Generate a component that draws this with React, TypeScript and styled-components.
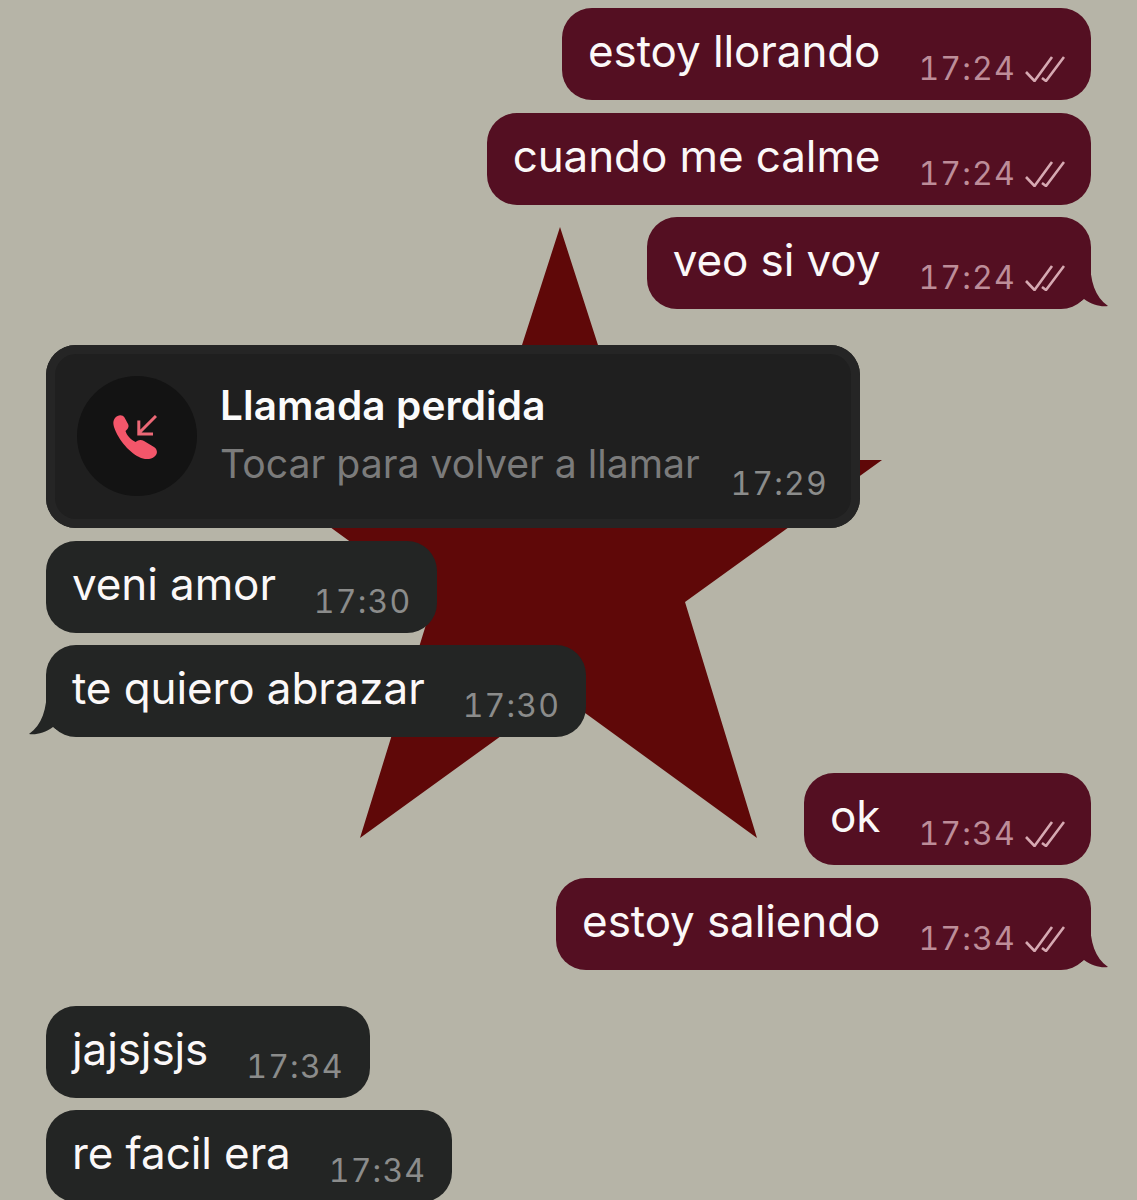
import React from "react";
import styled, { createGlobalStyle } from "styled-components";

interface IMessage {
  text: string;
  time: string;
}

interface IGroup {
  mine: boolean;
  messages: IMessage[];
}

const topGroup: IGroup = {
  mine: true,
  messages: [
    { text: "estoy llorando", time: "17:24" },
    { text: "cuando me calme", time: "17:24" },
    { text: "veo si voy", time: "17:24" },
  ],
};

const theirGroup: IGroup = {
  mine: false,
  messages: [
    { text: "veni amor", time: "17:30" },
    { text: "te quiero abrazar", time: "17:30" },
  ],
};

const myGroup: IGroup = {
  mine: true,
  messages: [
    { text: "ok", time: "17:34" },
    { text: "estoy saliendo", time: "17:34" },
  ],
};

const lastGroup: IGroup = {
  mine: false,
  messages: [
    { text: "jajsjsjs", time: "17:34" },
    { text: "re facil era", time: "17:34" },
  ],
};

const Star = () => (
  <StarSvg viewBox="0 0 1137 1200" aria-hidden="true">
    <polygon
      points="560,227 635,460 882,460 685,602 757,838 559,694 360,838 433,602 238,460 485,460"
      fill="#5f0808"
    />
  </StarSvg>
);

const Checks = () => (
  <ChecksSvg viewBox="0 0 40 26" aria-hidden="true">
    <path d="M1 16 L9.5 25 L27 1" />
    <path d="M17 22 L21 25 L39 1" />
  </ChecksSvg>
);

const MissedCallIcon = () => (
  <CallSvg viewBox="0 0 44 44" aria-hidden="true">
    <path
      d="M2 3 C5 -0.5 9.5 -0.5 11.5 2.5 L15 9 C16 11 15.5 13 14 14.5 L12.5 16 C13.5 20 18 25 22.5 27 L24.5 25.8 C26.5 24.6 29 24.8 31 26 L41 32 C44 34 44.8 37.5 43 40 C40.5 43.5 36.5 44.5 32 44 C22 42.5 9 30 3 17 C0.5 11.5 -1 7 2 3 Z"
      fill="#f4566a"
    />
    <path
      d="M43 1 L26 18 M25.8 5.5 L25.8 19 L40 19"
      fill="none"
      stroke="#ec6876"
      strokeWidth="3"
    />
  </CallSvg>
);

const Tail = ({ mine }: { mine: boolean }) => (
  <TailSvg $mine={mine} viewBox="0 0 40 50" aria-hidden="true">
    <path
      d="M21 0 C21 22 26 38 39 47 C32 48 23 46 15 40 C10 44 5 46 0 46 L0 0 Z"
      fill={mine ? "#540f22" : "#232524"}
    />
  </TailSvg>
);

const Bubble: React.FC<{ mine: boolean; tail: boolean; message: IMessage }> = ({
  mine,
  tail,
  message,
}) => (
  <BubbleRoot $mine={mine}>
    {tail && <Tail mine={mine} />}
    <MessageText>{message.text}</MessageText>
    <Meta>
      <Time $mine={mine}>{message.time}</Time>
      {mine && <Checks />}
    </Meta>
  </BubbleRoot>
);

const MessageGroup: React.FC<{ group: IGroup; tail?: boolean; children?: React.ReactNode }> = ({
  group,
  tail = true,
  children,
}) => (
  <Group $mine={group.mine}>
    {children}
    {group.messages.map((message, index) => (
      <Bubble
        key={message.text}
        mine={group.mine}
        message={message}
        tail={tail && index === group.messages.length - 1}
      />
    ))}
  </Group>
);

export default function App() {
  return (
    <>
      <GlobalStyle />
      <Page>
        <Star />
        <Thread>
          <MessageGroup group={topGroup} />
          <MessageGroup group={theirGroup}>
            <CallCard>
              <CallCircle>
                <MissedCallIcon />
              </CallCircle>
              <CallInfo>
                <CallTitle>Llamada perdida</CallTitle>
                <CallHint>Tocar para volver a llamar</CallHint>
              </CallInfo>
              <CallTime>17:29</CallTime>
            </CallCard>
          </MessageGroup>
          <MessageGroup group={myGroup} />
          <MessageGroup group={lastGroup} tail={false} />
        </Thread>
      </Page>
    </>
  );
}

const GlobalStyle = createGlobalStyle`
  html, body {
    margin: 0;
    padding: 0;
    background: #b6b4a7;
  }
`;

const Page = styled.div`
  position: relative;
  width: 1137px;
  height: 1200px;
  overflow: hidden;
  background: #b6b4a7;
  font-family: Inter, "Liberation Sans", sans-serif;
`;

const StarSvg = styled.svg`
  position: absolute;
  left: 0;
  top: 0;
  width: 1137px;
  height: 1200px;
`;

const Thread = styled.div`
  position: relative;
  display: flex;
  flex-direction: column;
  gap: 36px;
  padding: 8px 46px 0;
`;

const Group = styled.div<{ $mine: boolean }>`
  display: flex;
  flex-direction: column;
  gap: 12.5px;
  align-items: ${(p) => (p.$mine ? "flex-end" : "flex-start")};
`;

const BubbleRoot = styled.div<{ $mine: boolean }>`
  position: relative;
  display: flex;
  align-items: flex-start;
  height: 92px;
  box-sizing: border-box;
  padding: 0 26px;
  gap: 38px;
  border-radius: 30px;
  background: ${(p) => (p.$mine ? "#540f22" : "#232524")};
`;

const TailSvg = styled.svg<{ $mine: boolean }>`
  position: absolute;
  bottom: 0;
  width: 40px;
  height: 50px;
  ${(p) =>
    p.$mine
      ? "right: -18px;"
      : "left: -18px; transform: scaleX(-1);"}
`;

const MessageText = styled.span`
  position: relative;
  margin-top: 14px;
  font-size: 44px;
  line-height: 58px;
  letter-spacing: -0.1px;
  color: #fbf8f8;
  white-space: nowrap;
`;

const Meta = styled.div`
  position: relative;
  display: flex;
  align-items: center;
  gap: 9px;
  margin-top: 42px;
  height: 38px;
`;

const Time = styled.span<{ $mine: boolean }>`
  font-size: 32px;
  line-height: 38px;
  letter-spacing: 1.2px;
  font-variant-numeric: tabular-nums;
  color: ${(p) => (p.$mine ? "#bd8d99" : "#8b8c8b")};
`;

const ChecksSvg = styled.svg`
  width: 40px;
  height: 26px;
  fill: none;
  stroke: #d6a9b2;
  stroke-width: 2.6;
`;

const CallCard = styled.div`
  display: flex;
  align-items: flex-start;
  width: 814px;
  height: 183px;
  box-sizing: border-box;
  padding: 31px 32px 0 31px;
  border-radius: 30px;
  background: #1f1f1f;
  box-shadow: inset 0 0 0 9px #252525;
`;

const CallCircle = styled.div`
  display: flex;
  align-items: center;
  justify-content: center;
  flex: none;
  width: 120px;
  height: 120px;
  border-radius: 50%;
  background: #131313;
`;

const CallSvg = styled.svg`
  width: 44px;
  height: 44px;
  margin: 2px 4px 0 0;
`;

const CallInfo = styled.div`
  display: flex;
  flex-direction: column;
  margin-left: 23px;
  gap: 3px;
`;

const CallTitle = styled.div`
  font-size: 40.5px;
  font-weight: 600;
  line-height: 60px;
  letter-spacing: 0.1px;
  color: #fbfbfb;
  white-space: nowrap;
`;

const CallHint = styled.div`
  font-size: 39.2px;
  line-height: 50px;
  color: #7b7b7b;
  white-space: nowrap;
`;

const CallTime = styled.span`
  margin-left: auto;
  margin-top: 89px;
  font-size: 32px;
  line-height: 38px;
  letter-spacing: 1.2px;
  font-variant-numeric: tabular-nums;
  color: #8b8c8b;
`;
